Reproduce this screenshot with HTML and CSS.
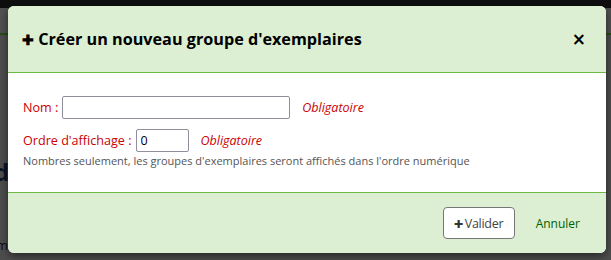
FILE: index.html
```html
<!DOCTYPE html>
<html lang="fr">
<head>
    <meta charset="UTF-8">
    <meta name="viewport" content="width=device-width, initial-scale=1.0">
    <title>Groupes d'exemplaires</title>
    <link rel="stylesheet" href="styles.css">
</head>
<body>
    <div class="page">
        <div class="topbar"></div>
        <div class="navline"></div>
        <div class="page-content">
            <div class="page-title">d</div>
            <div class="page-text">m</div>
        </div>
    </div>
    <div class="backdrop"></div>

    <div class="modal">
        <div class="modal-header">
            <h3><span class="plus">✚</span> Créer un nouveau groupe d'exemplaires</h3>
            <button type="button" class="close">×</button>
        </div>
        <div class="modal-body">
            <div class="row">
                <label for="name">Nom :</label>
                <input type="text" id="name" class="input-name">
                <span class="required">Obligatoire</span>
            </div>
            <div class="row">
                <label for="order">Ordre d'affichage :</label>
                <input type="text" id="order" class="input-order" value="0">
                <span class="required">Obligatoire</span>
            </div>
            <div class="hint">Nombres seulement, les groupes d'exemplaires seront affichés dans l'ordre numérique</div>
        </div>
        <div class="modal-footer">
            <button type="button" class="btn"><span class="plus">✚</span>Valider</button>
            <a href="#" class="cancel">Annuler</a>
        </div>
    </div>
</body>
</html>
```

FILE: styles.css
```css
* {
    box-sizing: border-box;
}
body {
    margin: 0;
    width: 611px;
    height: 260px;
    overflow: hidden;
    font-family: "Open Sans", "Noto Sans", sans-serif;
    background-color: #5b5b5b;
}
.page {
    height: 260px;
}
.topbar {
    height: 8px;
    background-color: #111;
}
.navline {
    height: 27px;
    border-bottom: 2px solid #2e5a1c;
    background-color: #5e5e5e;
}
.page-content {
    padding: 120px 0 0 0;
}
.page-title {
    font-size: 24px;
    font-weight: bold;
    color: #0e1a2a;
    margin-left: -6px;
}
.page-text {
    margin-top: 48px;
    font-size: 13px;
    color: #111;
    margin-left: -4px;
}
.backdrop {
    position: absolute;
    inset: 0;
    background-color: rgba(0, 0, 0, 0.15);
}
.modal {
    position: absolute;
    left: 8px;
    top: 6px;
    width: 598px;
    height: 247px;
    display: flex;
    flex-direction: column;
    background-color: #fff;
    border-radius: 6px;
    overflow: hidden;
    box-shadow: 0 3px 9px rgba(0, 0, 0, 0.5);
}
.modal-header {
    height: 67px;
    display: flex;
    align-items: center;
    justify-content: space-between;
    padding: 0 20px 0 14px;
    background-color: #dcefd3;
    border-bottom: 1px solid #6fba45;
}
.modal-header h3 {
    margin: 0;
    font-size: 16.2px;
    font-weight: bold;
    color: #000;
}
.plus {
    font-size: 14px;
}
.close {
    border: none;
    background: none;
    padding: 0;
    font-family: "DejaVu Sans", sans-serif;
    font-size: 17px;
    font-weight: bold;
    color: #000;
    cursor: pointer;
}
.modal-body {
    flex: 1;
    padding: 23px 15px 0 15px;
    font-size: 12px;
}
.row {
    display: flex;
    align-items: center;
    gap: 4px;
    margin-bottom: 10px;
}
.row label {
    color: #cc0000;
    font-size: 12.6px;
}
.row input {
    height: 23px;
    border: 1px solid #8f8f9d;
    border-radius: 2px;
    font-family: "Open Sans", sans-serif;
    font-size: 12.5px;
    padding: 0 4px;
}
.input-name {
    width: 228px;
}
.input-order {
    width: 53px;
}
.required {
    margin-left: 8px;
    color: #cc0000;
    font-style: italic;
    font-size: 12.5px;
}
.hint {
    margin-top: -9px;
    color: #555;
    font-size: 11px;
}
.modal-footer {
    height: 61px;
    display: flex;
    align-items: center;
    justify-content: flex-end;
    gap: 21px;
    padding: 0 26px 0 0;
    background-color: #dcefd3;
    border-top: 1px solid #6fba45;
}
.btn {
    width: 72px;
    height: 32px;
    padding: 0;
    border: 1px solid #777;
    border-radius: 4px;
    background-color: #fff;
    font-family: "Open Sans", sans-serif;
    font-size: 12.5px;
    letter-spacing: -0.3px;
    color: #444;
    cursor: pointer;
}
.btn .plus {
    font-size: 11px;
    color: #333;
    margin-right: 2px;
}
.cancel {
    color: #006100;
    font-size: 12px;
    text-decoration: none;
}
```
